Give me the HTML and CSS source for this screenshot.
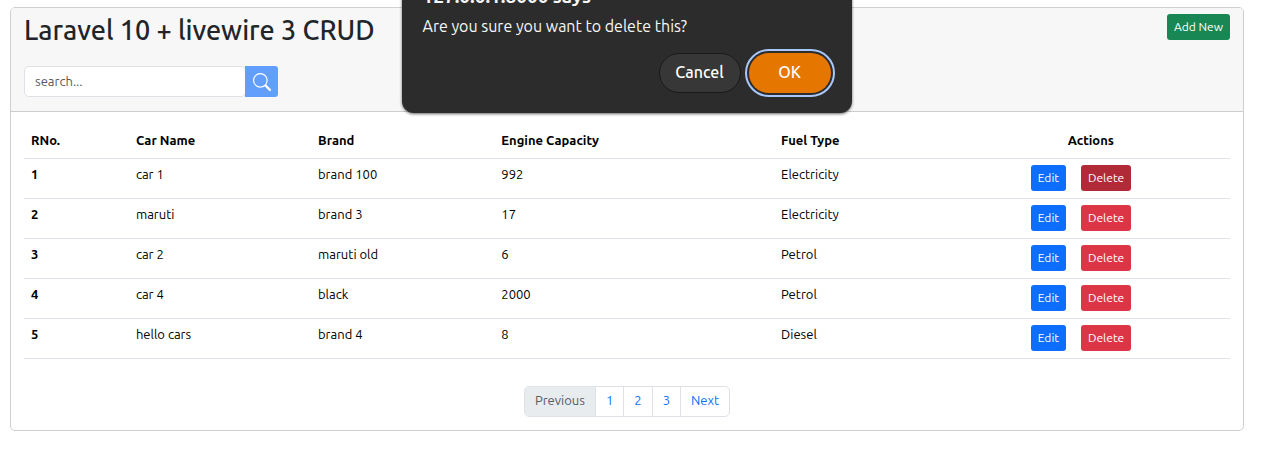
FILE: index.html
```html
<!DOCTYPE html>
<html lang="en">
<head>
<meta charset="utf-8">
<meta name="viewport" content="width=device-width, initial-scale=1">
<title>Laravel 10 + livewire 3 CRUD</title>
<link rel="stylesheet" href="styles.css">
</head>
<body>
<main class="card">
  <header class="card-header">
    <div class="title-row">
      <h1 class="title">Laravel 10 + livewire 3 CRUD</h1>
      <button class="btn btn-success" type="button">Add New</button>
    </div>
    <form class="search">
      <input class="search-input" type="text" placeholder="search..." aria-label="Search cars">
      <button class="search-button" type="button" aria-label="Search">
        <svg class="search-icon" viewBox="0 0 16 16" fill="currentColor" aria-hidden="true"><path d="M11.742 10.344a6.5 6.5 0 1 0-1.397 1.398h-.001q.044.06.098.115l3.85 3.85a1 1 0 0 0 1.415-1.414l-3.85-3.85a1 1 0 0 0-.115-.1zM12 6.5a5.5 5.5 0 1 1-11 0 5.5 5.5 0 0 1 11 0"/></svg>
      </button>
    </form>
  </header>
  <div class="card-body">
    <table class="table">
      <colgroup>
        <col class="col-number"><col class="col-name"><col class="col-brand"><col class="col-engine"><col class="col-fuel"><col class="col-actions">
      </colgroup>
      <thead>
        <tr><th scope="col">RNo.</th><th scope="col">Car Name</th><th scope="col">Brand</th><th scope="col">Engine Capacity</th><th scope="col">Fuel Type</th><th class="actions-head" scope="col">Actions</th></tr>
      </thead>
      <tbody>
        <tr><th scope="row">1</th><td>car 1</td><td>brand 100</td><td>992</td><td>Electricity</td><td><div class="actions"><button class="btn btn-primary" type="button">Edit</button><button class="btn btn-danger btn-active" type="button">Delete</button></div></td></tr>
        <tr><th scope="row">2</th><td>maruti</td><td>brand 3</td><td>17</td><td>Electricity</td><td><div class="actions"><button class="btn btn-primary" type="button">Edit</button><button class="btn btn-danger" type="button">Delete</button></div></td></tr>
        <tr><th scope="row">3</th><td>car 2</td><td>maruti old</td><td>6</td><td>Petrol</td><td><div class="actions"><button class="btn btn-primary" type="button">Edit</button><button class="btn btn-danger" type="button">Delete</button></div></td></tr>
        <tr><th scope="row">4</th><td>car 4</td><td>black</td><td>2000</td><td>Petrol</td><td><div class="actions"><button class="btn btn-primary" type="button">Edit</button><button class="btn btn-danger" type="button">Delete</button></div></td></tr>
        <tr><th scope="row">5</th><td>hello cars</td><td>brand 4</td><td>8</td><td>Diesel</td><td><div class="actions"><button class="btn btn-primary" type="button">Edit</button><button class="btn btn-danger" type="button">Delete</button></div></td></tr>
      </tbody>
    </table>
    <nav class="pages" aria-label="Pages">
      <ul class="pagination">
        <li class="page page-disabled"><a class="page-link" aria-disabled="true">Previous</a></li>
        <li class="page"><a class="page-link" href="#">1</a></li>
        <li class="page"><a class="page-link" href="#">2</a></li>
        <li class="page"><a class="page-link" href="#">3</a></li>
        <li class="page"><a class="page-link" href="#">Next</a></li>
      </ul>
    </nav>
  </div>
</main>
<div class="dialog" role="alertdialog" aria-labelledby="dialog-title" aria-describedby="dialog-text">
  <h2 class="dialog-title" id="dialog-title">127.0.0.1:8000 says</h2>
  <p class="dialog-text" id="dialog-text">Are you sure you want to delete this?</p>
  <div class="dialog-buttons">
    <button class="dialog-button" type="button">Cancel</button>
    <button class="dialog-button dialog-ok" type="button">OK</button>
  </div>
</div>
</body>
</html>
```
FILE: styles.css
```css
* { box-sizing: border-box; }
body {
  margin: 0;
  padding: 7px 29px 19px 10px;
  background: #fff;
  color: #212529;
  font: 13px/20px Ubuntu, "Noto Sans", sans-serif;
}
button, input { font: inherit; }
.card { border: 1px solid #cecfd0; border-radius: 5px; overflow: hidden; }
.card-header { padding: 6px 13px 14px; background: #f7f7f7; border-bottom: 1px solid #cccdce; }
.title-row { display: flex; justify-content: space-between; align-items: flex-start; margin-bottom: 20px; }
.title { margin: 0; font-size: 27px; font-weight: 500; line-height: 32px; }
.btn {
  height: 26px;
  padding: 0 7px;
  border: 0;
  border-radius: 3px;
  color: #fff;
  font-size: 12px;
  line-height: 26px;
  white-space: nowrap;
}
.btn-success { background: #198754; }
.btn-primary { background: #0d6efd; }
.btn-danger { background: #dc3545; }
.btn-active { background: #b02a37; }
.search { display: flex; }
.search-input {
  width: 222px;
  height: 31px;
  padding: 0 10px 2px;
  border: 1px solid #dee2e6;
  border-radius: 5px;
  background: #fff;
  color: #212529;
}
.search-input::placeholder { color: #54595e; opacity: 1; }
.search-button {
  display: grid;
  place-items: center;
  width: 33px;
  height: 31px;
  margin-left: -1px;
  padding: 0;
  border: 0;
  border-radius: 0 3px 3px 0;
  background: #629ffd;
  color: #fff;
}
.search-icon { width: 18px; height: 18px; }
.card-body { padding: 12px 13px 13px; }
.table { width: 100%; border-collapse: collapse; table-layout: fixed; color: #000; }
.table th, .table td { height: 40px; padding: 6px 7px; border-bottom: 1px solid #dee2e6; line-height: 19px; text-align: left; vertical-align: top; }
.table thead th { height: 34px; line-height: 20px; }
.table .actions-head { padding-left: 44px; }
.col-number { width: 8.7%; }
.col-name { width: 15.1%; }
.col-brand { width: 15.2%; }
.col-engine { width: 23.2%; }
.col-fuel { width: 20.7%; }
.actions { display: flex; gap: 15px; }
.pages { display: flex; justify-content: center; margin-top: 27px; }
.pagination { display: flex; margin: 0; padding: 0; list-style: none; border: 1px solid #dee2e6; border-radius: 5px; overflow: hidden; }
.page + .page { border-left: 1px solid #dee2e6; }
.page-link { display: block; padding: 3px 10px 6px; color: #0d6efd; text-decoration: none; }
.page-disabled { background: #e9ecef; }
.page-disabled .page-link { color: #575b5f; }
.dialog {
  position: absolute;
  top: -25px;
  left: 50%;
  width: 450px;
  margin-left: -235px;
  padding: 10px 21px 20px;
  border-radius: 0 0 12px 12px;
  background: #2c2c2c;
  color: #f7f7f7;
  box-shadow: 0 1px 3px rgba(0, 0, 0, .6);
}
.dialog-title { margin: 0 0 7px; font-size: 19px; font-weight: 700; line-height: 22px; }
.dialog-text { margin: 0 0 15px; font-size: 16px; line-height: 24px; }
.dialog-buttons { display: flex; justify-content: flex-end; gap: 8px; }
.dialog-button {
  min-width: 82px;
  height: 40px;
  padding: 0 15px 2px;
  border: 1px solid #1a1a1a;
  border-radius: 20px;
  background: #373737;
  color: #fff;
  font-size: 16px;
  font-weight: 500;
}
.dialog-ok { border: 0; background: #e57600; outline: 2px solid #a8c7fa; outline-offset: 2px; }
```
